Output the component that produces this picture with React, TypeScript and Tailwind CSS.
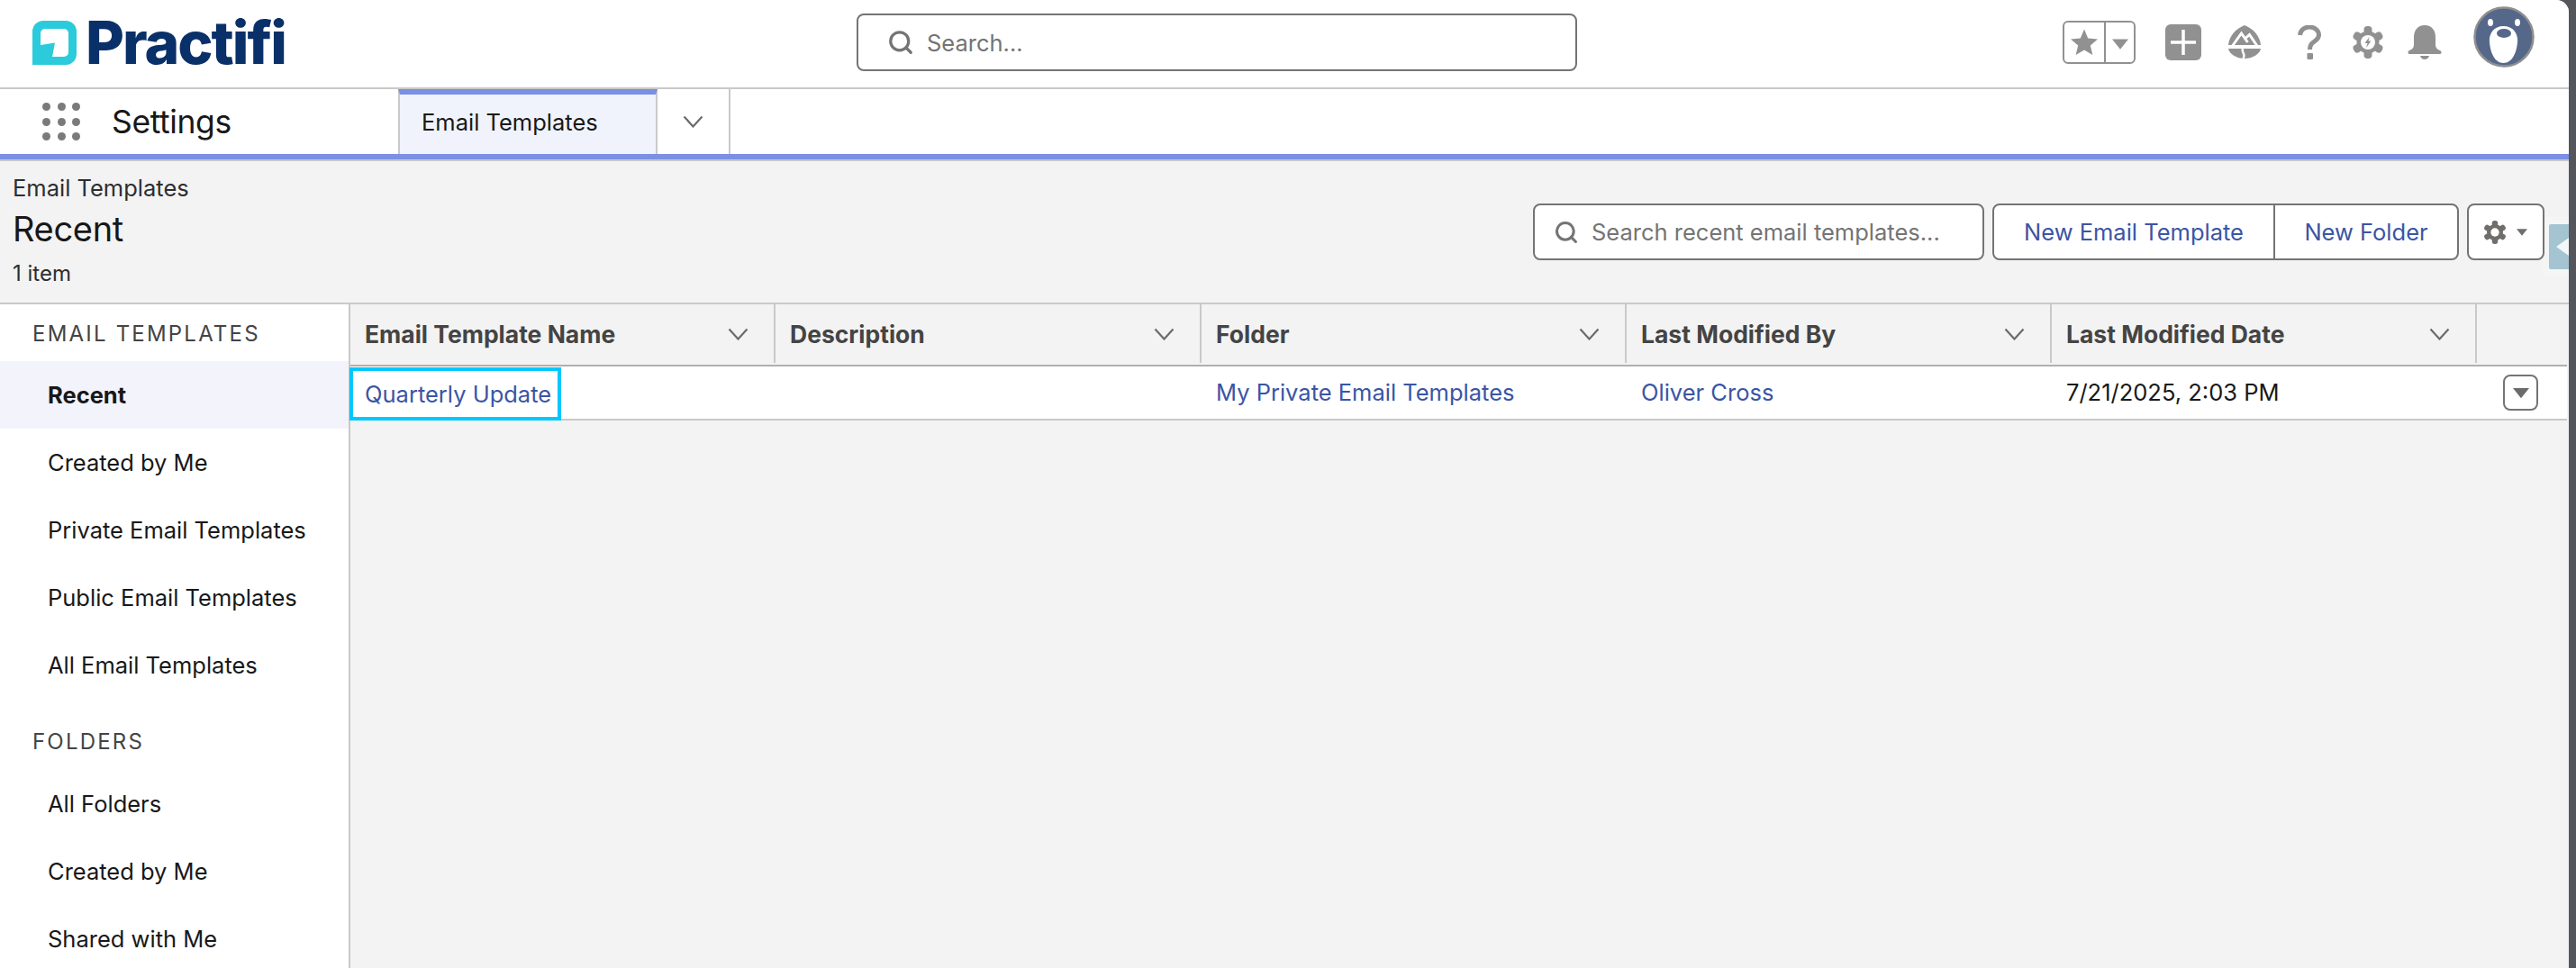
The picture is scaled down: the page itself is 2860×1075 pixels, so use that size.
import React from "react";
import { Search } from "lucide-react";

const F = { fontFamily: "Inter, 'Noto Sans', sans-serif" };

function Chevron({ w = 23, h = 14, c = "#6b6b6b" }: { w?: number; h?: number; c?: string }) {
  return (
    <svg width={w} height={h} viewBox="0 0 23 14" fill="none">
      <path d="M1.5 1.5 L11.5 12.5 L21.5 1.5" stroke={c} strokeWidth="2.2" />
    </svg>
  );
}

function Caret({ w = 16, h = 10, c = "#919191" }: { w?: number; h?: number; c?: string }) {
  return (
    <svg width={w} height={h} viewBox="0 0 16 10">
      <path d="M0 0 H16 L8 10 Z" fill={c} />
    </svg>
  );
}

function Gear({ size = 34, c = "#919191", bolt = false }: { size?: number; c?: string; bolt?: boolean }) {
  return (
    <svg width={size} height={size} viewBox="0 0 36 36">
      {[0, 60, 120, 180, 240, 300].map((a) => (
        <rect key={a} x="13.5" y="0" width="9" height="9" rx="4" fill={c} transform={`rotate(${a} 18 18)`} />
      ))}
      <circle cx="18" cy="18" r="12.5" fill={c} />
      <circle cx="18" cy="18" r={bolt ? 8 : 6.5} fill="#fff" />
      {bolt && <path d="M19.5 12 L14.5 19 H17.5 L16 24 L21.5 16.5 H18.5 Z" fill={c} />}
    </svg>
  );
}

function Logo() {
  return (
    <div className="flex items-center">
      <svg width="49" height="49" viewBox="0 0 49 49">
        <path
          d="M12 0 H37 A12 12 0 0 1 49 12 V37 A12 12 0 0 1 37 49 H0 V12 A12 12 0 0 1 12 0 Z"
          fill="#2bcbdc"
        />
        <path
          d="M9 27 L25 24.5 L22 40 H35 A5 5 0 0 0 40 35 V14 A5 5 0 0 0 35 9 H14 A5 5 0 0 0 9 14 Z"
          fill="#fff"
        />
      </svg>
      <span className="ml-[10px] text-[66px] leading-[50px] font-extrabold tracking-[-2px] text-[#0a3069]">Practifi</span>
    </div>
  );
}

function Dots() {
  return (
    <div className="grid grid-cols-3 gap-x-[7.5px] gap-y-[7.5px] w-[42px]">
      {Array.from({ length: 9 }).map((_, i) => (
        <span key={i} className="block w-[9px] h-[9px] rounded-full bg-[#7a7a7a]" />
      ))}
    </div>
  );
}

function TopIcons() {
  return (
    <div className="flex items-center ml-auto pr-[38px]">
      <div className="flex items-center w-[81px] h-[48px] rounded-[6px] border-2 border-[#919191]">
        <div className="w-[46px] h-full border-r-2 border-[#919191] flex items-center justify-center">
          <svg width="30" height="30" viewBox="0 0 30 30">
            <path d="M15 0.5 L19.2 10.5 L30 11.4 L21.8 18.4 L24.3 29 L15 23.4 L5.7 29 L8.2 18.4 L0 11.4 L10.8 10.5 Z" fill="#919191" />
          </svg>
        </div>
        <div className="flex-1 flex items-center justify-center pt-[4px]">
          <Caret w={18} h={12} />
        </div>
      </div>
      <div className="ml-[33px] w-[40px] h-[40px] rounded-[6px] bg-[#919191] flex items-center justify-center">
        <svg width="28" height="28" viewBox="0 0 28 28">
          <path d="M14 0 V28 M0 14 H28" stroke="#fff" strokeWidth="3.5" />
        </svg>
      </div>
      <svg className="ml-[29px]" width="38" height="38" viewBox="0 0 38 38">
        <path d="M19 0 C29 4 36 12 37 22 H1 C2 12 9 4 19 0 Z" fill="#919191" />
        <path d="M1 26 H37 C36 32 28 37 19 37 C10 37 2 32 1 26 Z" fill="#919191" />
        <path d="M5.5 23 L15.5 9 L22.5 19 M19.5 15 L24.5 10.5 L33 23" fill="none" stroke="#fff" strokeWidth="3" />
        <path d="M17.5 26 C14 29 21 31 17.5 37" fill="none" stroke="#fff" strokeWidth="2.4" />
      </svg>
      <svg className="ml-[40px]" width="26" height="38" viewBox="0 0 26 38">
        <path d="M2.5 11 C3 5 8 2 13 2 C19 2 23.5 6 23.5 11 C23.5 16 19 17 16 20 C14 22 13.5 24 13.5 27" fill="none" stroke="#919191" strokeWidth="5" />
        <rect x="10.5" y="31" width="6.5" height="7" rx="1" fill="#919191" />
      </svg>
      <div className="ml-[34px]">
        <Gear size={36} bolt />
      </div>
      <svg className="ml-[26px]" width="38" height="38" viewBox="0 0 38 38">
        <path d="M19 0 C27 0 31 6 31 13 V21 C31 25 33 27 36 28 C38 29 38 32 36 32 H2 C0 32 0 29 2 28 C5 27 7 25 7 21 V13 C7 6 11 0 19 0 Z" fill="#919191" />
        <path d="M14 34 H24 C23 37 21 38 19 38 C17 38 15 37 14 34 Z" fill="#919191" />
      </svg>
      <svg className="ml-[35px] -mt-[12px]" width="68" height="68" viewBox="0 0 68 68">
        <circle cx="34" cy="34" r="32.5" fill="#56688a" stroke="#8f8f8f" strokeWidth="2.5" />
        <ellipse cx="19" cy="18" rx="3" ry="4" fill="#fff" />
        <ellipse cx="49" cy="18" rx="3" ry="4" fill="#fff" />
        <path d="M33.5 22 C44 22 50 30 49 40 C48 52 43 63 33.5 63 C24 63 19 52 18 40 C17 30 23 22 33.5 22 Z" fill="#fff" />
        <ellipse cx="34" cy="30" rx="8" ry="5" fill="#56688a" />
      </svg>
    </div>
  );
}

const nav1 = ["Recent", "Created by Me", "Private Email Templates", "Public Email Templates", "All Email Templates"];
const nav2 = ["All Folders", "Created by Me", "Shared with Me"];

function NavItem({ label, active }: { label: string; active?: boolean }) {
  return (
    <div
      className={`h-[75px] flex items-center pl-[53px] pt-[1px] text-[25.5px] ${
        active ? "bg-[#f3f3fc] font-bold text-[#181818]" : "text-[#181818]"
      }`}
    >
      {label}
    </div>
  );
}

function Sidebar() {
  return (
    <aside className="w-[389px] shrink-0 bg-white border-r-2 border-[#c9c9c9] overflow-hidden">
      <div className="h-[63px] flex items-center pl-[36px] pt-[2px] text-[24px] tracking-[2.2px] text-[#444444]">EMAIL TEMPLATES</div>
      {nav1.map((n, i) => (
        <NavItem key={n} label={n} active={i === 0} />
      ))}
      <div className="h-[48px] mt-[23px] flex items-center pl-[36px] pt-[2px] text-[24px] tracking-[2.2px] text-[#444444]">FOLDERS</div>
      <div className="mt-[8px]">
        {nav2.map((n) => (
          <NavItem key={n} label={n} />
        ))}
      </div>
    </aside>
  );
}

const cols = [
  { name: "Email Template Name", w: "w-[472px]" },
  { name: "Description", w: "w-[473px]" },
  { name: "Folder", w: "w-[472px]" },
  { name: "Last Modified By", w: "w-[472px]" },
  { name: "Last Modified Date", w: "w-[472px]" },
];

function Table() {
  return (
    <main className="flex-1 min-w-0 bg-[#f3f3f3] pr-[2px]">
      <div className="h-[67px] flex">
        {cols.map((c) => (
          <div key={c.name} className={`${c.w} shrink-0 h-[65px] border-r-2 border-[#c9c9c9] flex items-center justify-between pr-[28px] pl-[16px]`}>
            <span className="text-[26.5px] font-bold text-[#444444] pt-[2px]">{c.name}</span>
            <Chevron />
          </div>
        ))}
      </div>
      <div className="h-[62px] flex bg-white border-t-2 border-b-2 border-t-[#b0b0b0] border-b-[#c9c9c9] text-[25.5px]">
        <div className="w-[472px] shrink-0 flex items-start">
          <a className="-ml-[1px] mt-[1px] w-[235px] h-[59px] shrink-0 relative border-[4px] border-[#00c8ff] bg-white flex items-center pl-[13px] pt-[1px] text-[#3a55a5]">
            Quarterly Update
          </a>
        </div>
        <div className="w-[473px] shrink-0" />
        <div className="w-[472px] shrink-0 flex items-center pl-[16px] pt-[1px] text-[#3a55a5]">My Private Email Templates</div>
        <div className="w-[472px] shrink-0 flex items-center pl-[16px] pt-[1px] text-[#3a55a5]">Oliver Cross</div>
        <div className="w-[472px] shrink-0 flex items-center pl-[16px] pt-[1px] text-[#181818]">7/21/2025, 2:03 PM</div>
        <div className="flex-1 flex items-center pl-[29px]">
          <div className="w-[39px] h-[40px] rounded-[8px] border-2 border-[#747474] bg-white flex items-center justify-center">
            <Caret w={18} h={13} c="#6b6b6b" />
          </div>
        </div>
      </div>
    </main>
  );
}

export default function App() {
  return (
    <div className="w-full h-screen overflow-hidden bg-[#55565c]" style={F}>
      <div className="relative w-[2852px] h-full flex flex-col bg-[#f3f3f3] rounded-tr-[14px] overflow-hidden">
        <header className="h-[99px] shrink-0 bg-white border-b-2 border-[#c9c9c9] flex items-center pb-[3px]">
          <div className="w-[951px] shrink-0 pl-[36px]">
            <Logo />
          </div>
          <div className="w-[800px] h-[64px] shrink-0 rounded-[8px] border-2 border-[#747474] bg-white flex items-center pl-[32px] gap-[14px]">
            <Search size={30} strokeWidth={2.6} color="#747474" />
            <span className="text-[25.5px] text-[#747474] pt-[2px]">Search...</span>
          </div>
          <TopIcons />
        </header>

        <nav className="h-[80px] shrink-0 bg-white border-b-[8px] flex" style={{ borderBottomColor: "#7b8fe3" }}>
          <div className="w-[442px] shrink-0 flex items-center pl-[47px]">
            <Dots />
            <span className="ml-[35px] text-[35.5px] tracking-[-0.4px] text-[#181818] pt-[2px]">Settings</span>
          </div>
          <div className="w-[288px] shrink-0 bg-[#f0f3fc] border-t-[6px] border-t-[#7b8fe3] border-x-2 border-x-[#c9c9c9] flex items-center pl-[24px] pb-[4px] text-[25.5px] text-[#181818]">
            Email Templates
          </div>
          <div className="w-[81px] shrink-0 border-r-2 border-[#c9c9c9] flex items-center justify-center">
            <Chevron />
          </div>
        </nav>
        <div className="h-[2px] -mt-[2px] shrink-0 bg-[#c9c9c9]" />

        <section className="h-[159px] shrink-0 flex justify-between border-b-2 border-[#c9c9c9] pl-[14px] pr-[27px]">
          <div className="pt-[15px] text-[#181818]">
            <div className="text-[25.5px] leading-[30px] text-[#2e2e2e]">Email Templates</div>
            <div className="text-[38px] leading-[46px] mt-[7px] tracking-[-0.3px]">Recent</div>
            <div className="text-[24px] leading-[30px] mt-[12px] text-[#2e2e2e]">1 item</div>
          </div>
          <div className="pt-[47px] flex items-start gap-[9px]">
            <div className="w-[501px] h-[63px] rounded-[8px] border-2 border-[#747474] bg-white flex items-center pl-[21px] gap-[14px]">
              <Search size={28} strokeWidth={2.6} color="#747474" />
              <span className="text-[25.5px] text-[#747474] pt-[2px]">Search recent email templates...</span>
            </div>
            <div className="w-[518px] h-[63px] rounded-[8px] border-2 border-[#747474] bg-white flex text-[25.5px] text-[#3a55a5]">
              <div className="w-[312px] border-r-2 border-[#747474] flex items-center justify-center pt-[2px]">New Email Template</div>
              <div className="flex-1 flex items-center justify-center pt-[2px]">New Folder</div>
            </div>
            <div className="relative z-10 w-[86px] h-[63px] rounded-[8px] border-2 border-[#747474] bg-white flex items-center pl-[16px] gap-[11px]">
              <Gear size={26} c="#706e6b" />
              <Caret w={12} h={8} c="#706e6b" />
            </div>
          </div>
        </section>

        <div className="flex-1 min-h-0 flex">
          <Sidebar />
          <Table />
        </div>

        <div className="absolute right-0 top-[241px] w-[30px] h-[66px] rounded-l-[8px] bg-[#f5f5f5] flex items-center pl-[8px]">
          <div className="w-[22px] h-[50px] rounded-l-[2px] bg-[#a3c4d0] flex items-center justify-end overflow-hidden">
            <div className="w-0 h-0 border-y-[10px] border-y-transparent border-r-[14px] border-r-[#f3f7f9]" />
          </div>
        </div>
      </div>
    </div>
  );
}
